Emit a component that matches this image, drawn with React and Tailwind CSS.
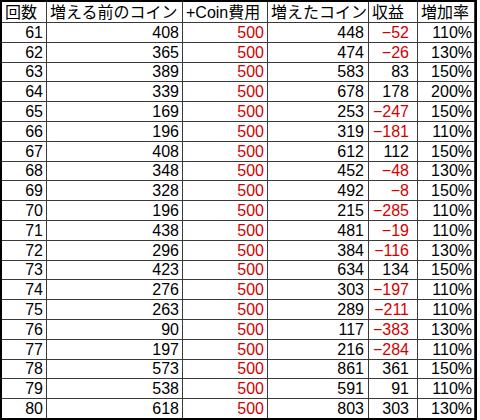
import React from "react";

const rows = [
  [61, 408, 448, -52, "110%"],
  [62, 365, 474, -26, "130%"],
  [63, 389, 583, 83, "150%"],
  [64, 339, 678, 178, "200%"],
  [65, 169, 253, -247, "150%"],
  [66, 196, 319, -181, "110%"],
  [67, 408, 612, 112, "150%"],
  [68, 348, 452, -48, "130%"],
  [69, 328, 492, -8, "150%"],
  [70, 196, 215, -285, "110%"],
  [71, 438, 481, -19, "110%"],
  [72, 296, 384, -116, "130%"],
  [73, 423, 634, 134, "150%"],
  [74, 276, 303, -197, "110%"],
  [75, 263, 289, -211, "110%"],
  [76, 90, 117, -383, "130%"],
  [77, 197, 216, -284, "110%"],
  [78, 573, 861, 361, "150%"],
  [79, 538, 591, 91, "110%"],
  [80, 618, 803, 303, "130%"],
];

const headers = ["回数", "増える前のコイン", "+Coin費用", "増えたコイン", "収益", "増加率"];

const num = "flex items-end justify-end bg-white pb-[1px] text-[16px] leading-none";

export default function App() {
  return (
    <div className="bg-white w-[480px] h-[420px]">
      <div
        className="grid w-[477px] border-2 border-black bg-[#3a3a3a] gap-px text-black grid-cols-[44px_135px_84px_100px_48px_56px] grid-rows-[20px_repeat(20,18.8px)]"
        style={{ fontFamily: '"Liberation Sans", "Noto Sans CJK JP", sans-serif' }}
      >
        {headers.map((h) => (
          <div
            key={h}
            className="flex items-end bg-white pl-[3px] text-[16px] leading-none pb-[1px] whitespace-nowrap overflow-hidden"
          >
            {h}
          </div>
        ))}
        {rows.map((r) => (
          <React.Fragment key={r[0]}>
            <div className={`${num} pr-[3px]`}>{r[0]}</div>
            <div className={`${num} pr-[3px]`}>{r[1]}</div>
            <div className={`${num} pr-[3px] text-[#d40000]`}>500</div>
            <div className={`${num} pr-[4px]`}>{r[2]}</div>
            <div className={`${num} pr-[8px] ${r[3] < 0 ? "text-[#d40000]" : ""}`}>
              {r[3] < 0 ? `−${-r[3]}` : r[3]}
            </div>
            <div className={`${num} pr-[2px]`}>{r[4]}</div>
          </React.Fragment>
        ))}
      </div>
    </div>
  );
}
